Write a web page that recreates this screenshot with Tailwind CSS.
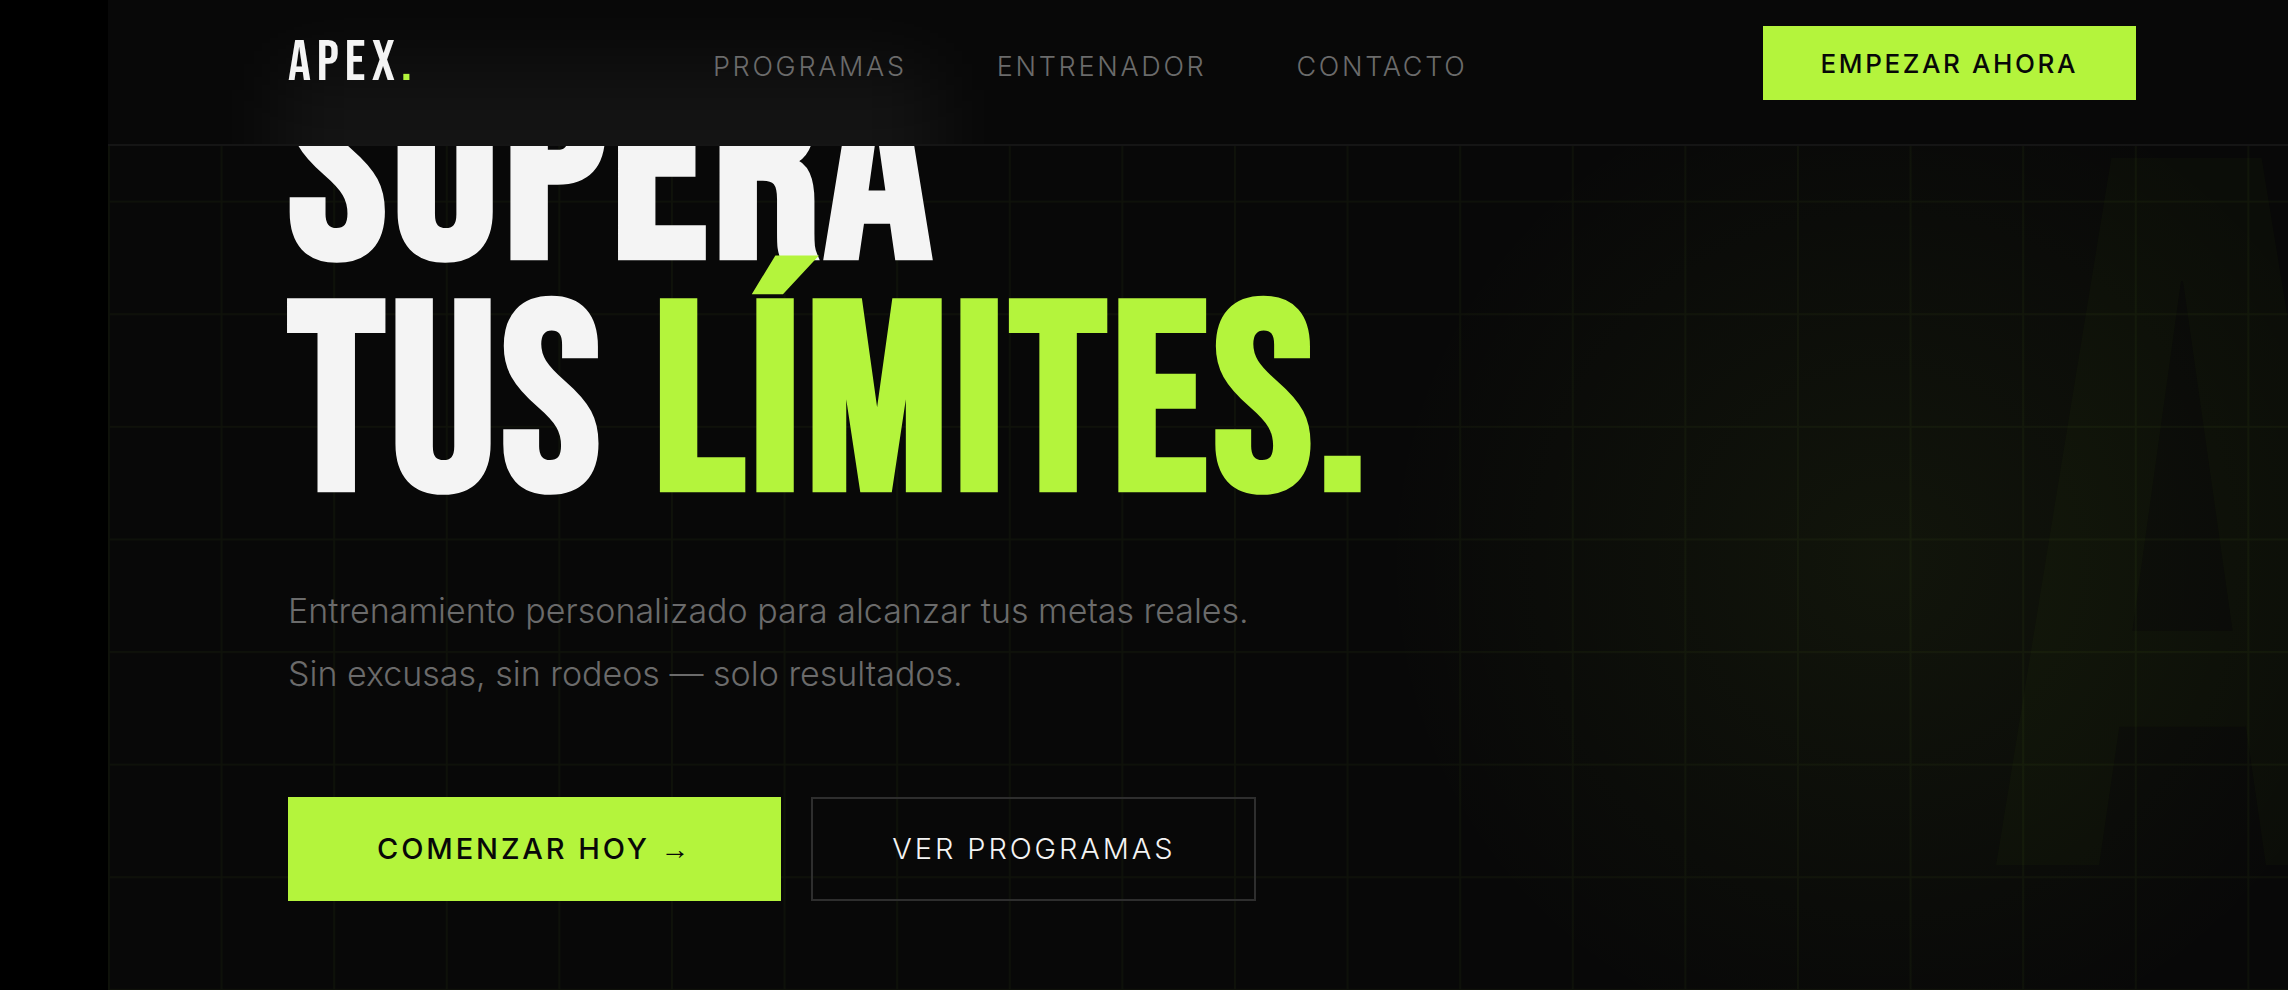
<!DOCTYPE html>
<html lang="es">
<head>
    <meta charset="UTF-8">
    <meta name="viewport" content="width=device-width, initial-scale=1.0">
    <title>APEX. Entrenamiento personal</title>
    <script src="https://cdn.jsdelivr.net/npm/@tailwindcss/browser@4"></script>
</head>
<body class="bg-black font-['Inter',sans-serif] text-[#f4f4f4] antialiased">
    <div class="pl-[108px]">
        <div class="relative min-h-screen overflow-hidden bg-[#080808]">

            <!-- Background: grid, glow and big letter -->
            <div class="absolute inset-0 overflow-hidden" aria-hidden="true">
                <div class="absolute -right-[160px] top-0 size-[1126px] bg-[radial-gradient(circle_closest-side,rgba(180,244,60,0.055),transparent_90%)]"></div>
                <svg class="absolute inset-0 h-full w-full">
                    <defs>
                        <pattern id="grid" width="112.6" height="112.6" y="88.1" patternUnits="userSpaceOnUse">
                            <path d="M0 .9H112.6M.9 0V112.6" fill="none" stroke="#b4f43c" stroke-opacity=".04" stroke-width="1.8"/>
                        </pattern>
                    </defs>
                    <rect width="100%" height="100%" fill="url(#grid)"/>
                </svg>
                <span class="absolute left-[1876px] top-[62px] font-['Bebas_Neue',sans-serif] text-[1010px] leading-[1000px] text-[#b4f43c]/[0.025] select-none">A</span>
            </div>

            <!-- Header -->
            <header class="absolute inset-x-0 top-0 z-10 overflow-hidden border-b-2 border-[#151515] bg-[#080808] pt-[26px] pr-[152px] pb-[44px] pl-[180px]">
                <div class="absolute top-[64px] left-[170px] h-[180px] w-[660px] bg-white/5 blur-[40px]" aria-hidden="true"></div>
                <div class="relative flex items-center justify-between">
                    <a href="#" class="font-['Bebas_Neue',sans-serif] text-[57px] leading-[64px] tracking-[6px]">APEX<span class="text-[#b4f43c]">.</span></a>
                    <nav class="flex gap-[90px] pt-2 text-[27px] font-light tracking-widest text-[#6b6b6b]">
                        <a href="#programas">PROGRAMAS</a>
                        <a href="#entrenador">ENTRENADOR</a>
                        <a href="#contacto">CONTACTO</a>
                    </nav>
                    <button type="button" class="h-[74px] bg-[#b4f43c] px-[58px] text-[26px] font-medium tracking-widest text-[#080808]">EMPEZAR AHORA</button>
                </div>
            </header>

            <!-- Hero -->
            <main class="relative pt-[61px] pl-[180px]">
                <h1 class="font-['Bebas_Neue',sans-serif] text-[265px] leading-[232px] font-bold tracking-[0.02em]">
                    SUPERA<br>
                    TUS <span class="text-[#b4f43c]">LÍMITES.</span>
                </h1>
                <p class="mt-[54px] text-[34px] leading-[63px] font-light text-[#6b6b6b]">
                    Entrenamiento personalizado para alcanzar tus metas reales.<br>
                    Sin excusas, sin rodeos — solo resultados.
                </p>
                <div class="mt-[92px] flex gap-[30px]">
                    <button type="button" class="h-[104px] bg-[#b4f43c] px-[89px] text-[29px] font-medium tracking-widest text-[#080808]">COMENZAR HOY <span class="font-['Liberation_Sans',sans-serif]">→</span></button>
                    <button type="button" class="h-[104px] border-2 border-[#2e2e2e] px-[79px] text-[29px] font-light tracking-widest">VER PROGRAMAS</button>
                </div>
            </main>
        </div>
    </div>
</body>
</html>
